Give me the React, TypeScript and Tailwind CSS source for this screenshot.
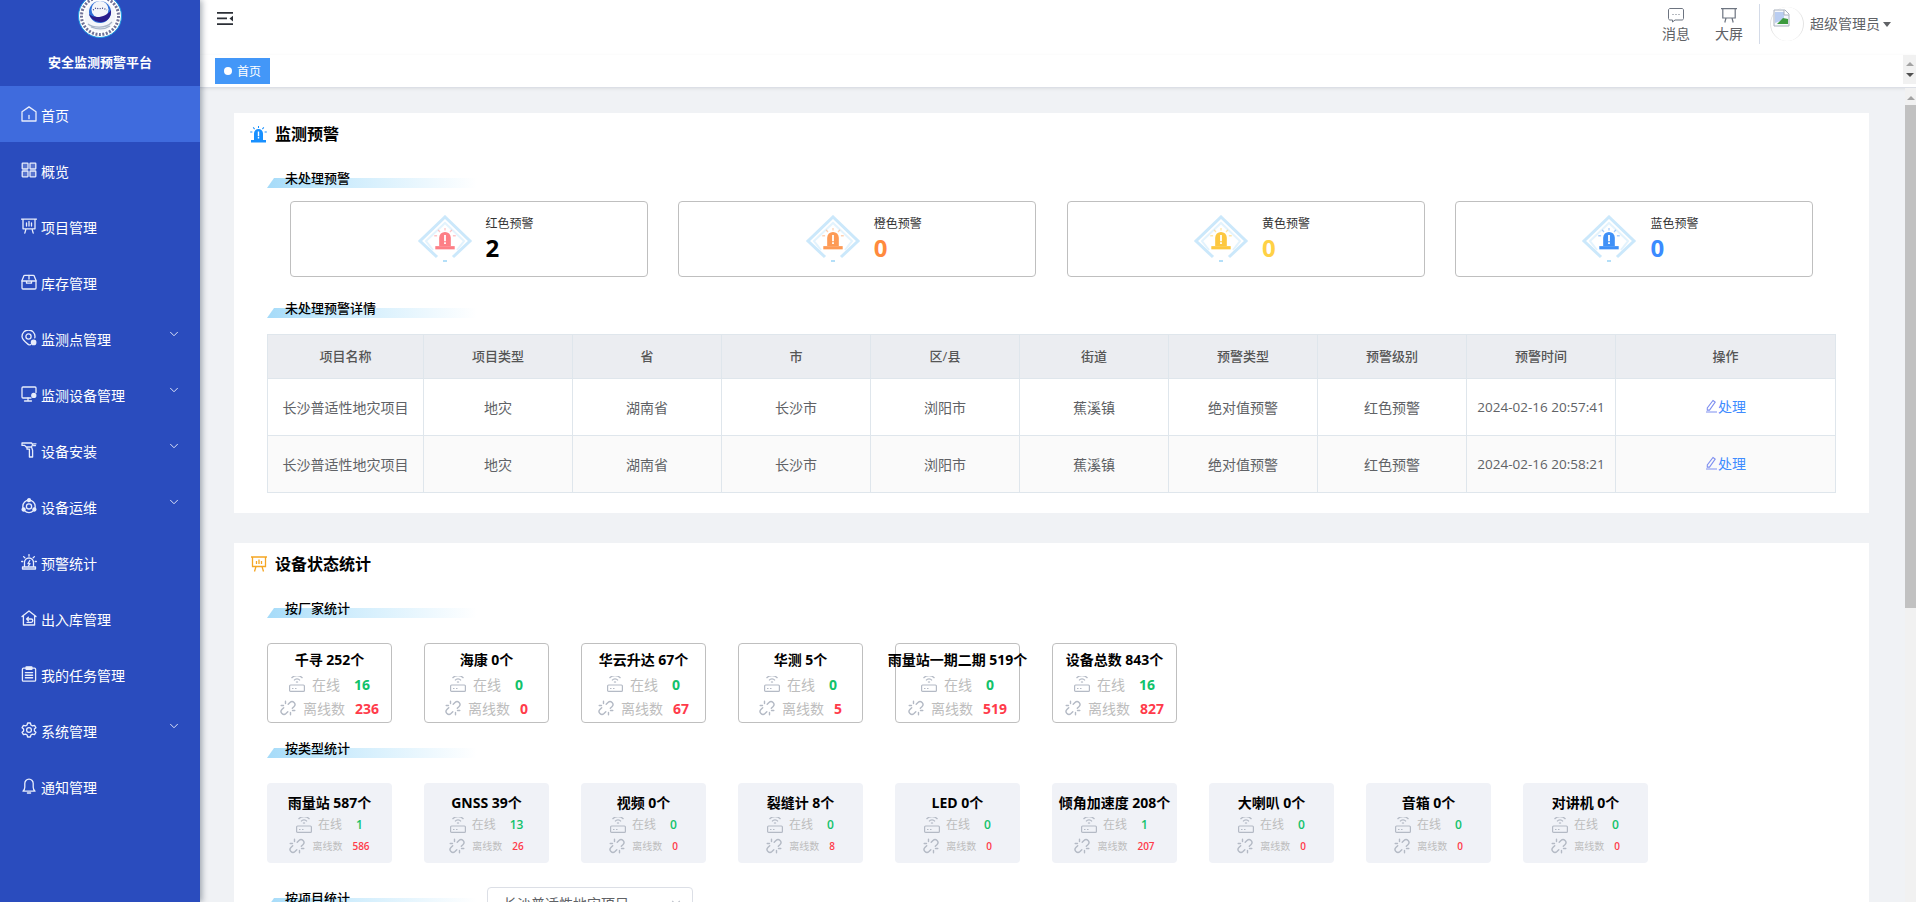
import type { ReactNode } from 'react';
import { ChevronDown } from 'lucide-react';

const strokeProps = {
  fill: 'none',
  stroke: 'currentColor',
  strokeWidth: 1.3,
  strokeLinecap: 'round' as const,
  strokeLinejoin: 'round' as const,
};

function Glyph({ size = 16, children, className }: { size?: number; children: ReactNode; className?: string }) {
  return (
    <svg width={size} height={size} viewBox="0 0 16 16" className={className} {...strokeProps}>
      {children}
    </svg>
  );
}

const navIcons: Record<string, ReactNode> = {
  home: (
    <>
      <path d="M1 15V5.800L8 .9l7 4.900V15z" />
      <path d="M8 9.500v3.200" />
    </>
  ),
  grid: (
    <>
      <rect x="1.200" y="1.200" width="5.800" height="5.800" rx=".5" fill="currentColor" fillOpacity=".25" />
      <rect x="9" y="1.200" width="5.800" height="5.800" rx=".5" fill="currentColor" fillOpacity=".25" />
      <rect x="1.200" y="9" width="5.800" height="5.800" rx=".5" fill="currentColor" fillOpacity=".25" />
      <rect x="9" y="9" width="5.800" height="5.800" rx=".5" fill="currentColor" fillOpacity=".25" />
    </>
  ),
  board: <path d="M.5 1.200h15M2 1.200v9.600h12V1.200M5 10.800l-1.200 4.400M11 10.800l1.200 4.400M5.500 8V5M8 8V3.500M10.500 8V5" />,
  box: (
    <>
      <path d="M1 6.500l1.800-4.600c.2-.4.500-.6.9-.6h8.600c.4 0 .7.2.9.6L15 6.500V14c0 .6-.4 1-1 1H2c-.6 0-1-.4-1-1z" />
      <path d="M1 7h14M5.500 7v2.200h5V7M8 1.500V5" />
    </>
  ),
  pin: (
    <>
      <path d="M9.500 14.600C8.800 15 8.200 15.200 7.500 14.600 5 12.600 1 9.700 1 6.500a6.500 6.500 0 0 1 13 0c0 .6-.1 1-.2 1.300" />
      <circle cx="7.500" cy="6.500" r="2.600" />
      <circle cx="12.600" cy="12.400" r="2.200" fill="currentColor" />
    </>
  ),
  monitor: (
    <>
      <path d="M15 6.500V2c0-.6-.4-1-1-1H2c-.6 0-1 .4-1 1v9c0 .6.4 1 1 1h8" />
      <path d="M7 12v3M3.500 15h7" />
      <circle cx="12.800" cy="9.400" r="2" fill="currentColor" />
    </>
  ),
  drill: <path d="M1 1h9.500l1.200 1.500L10.500 5H5.200L3.600 3.400H1zM6 5v2.200h2.400V15h3.200V8.200L10.500 5M12.500 1.800H15M12.500 3.600h2" />,
  ops: (
    <>
      <circle cx="8" cy="8.400" r="6.200" />
      <circle cx="8" cy="8.400" r="2.600" />
      <circle cx="8" cy="2.200" r="1.500" fill="currentColor" />
      <circle cx="2.600" cy="11.500" r="1.500" fill="currentColor" />
      <circle cx="13.400" cy="11.500" r="1.500" fill="currentColor" />
    </>
  ),
  siren: (
    <>
      <path d="M3.500 13V8.500a4.500 4.500 0 0 1 9 0V13M1.500 15h13v-2h-13z" />
      <path d="M8.800 6.500L7 9.600h2L7.400 12M8 .6v1.600M2.600 2.600l1.200 1.200M13.400 2.600l-1.200 1.200M.6 7.500h1.200M14.200 7.500h1.200" />
    </>
  ),
  storehouse: (
    <>
      <path d="M1 6.600L8 1l7 5.600M2.400 5.600V15h11.200V5.600" />
      <path d="M5.600 9h4.600c1 0 1.600.7 1.600 1.600s-.6 1.700-1.600 1.700H6M7.400 7.300L5.600 9l1.800 1.700" />
    </>
  ),
  clipboard: (
    <>
      <rect x="1.400" y="2.200" width="13.200" height="13" rx="1" />
      <rect x="5" y=".8" width="6" height="2.600" rx=".5" fill="currentColor" />
      <path d="M4.400 6.600h7.200M4.400 9.200h7.200M4.400 11.800h7.200" strokeWidth="1.400" />
    </>
  ),
  gear: (
    <>
      <path d="M6.600 1h2.800l.5 2 1.600.9 2-.6 1.400 2.400-1.500 1.400v1.800l1.500 1.400-1.400 2.400-2-.6-1.600.9-.5 2H6.600l-.5-2-1.600-.9-2 .6L1.100 10.300l1.500-1.400V7.100L1.100 5.700l1.400-2.400 2 .6 1.600-.9z" />
      <circle cx="8" cy="8" r="2.400" />
    </>
  ),
  bell: (
    <>
      <path d="M8 1.200c-2.600 0-4.200 2-4.200 4.400v3.600c0 1.800-.8 3-1.800 4h12c-1-1-1.800-2.200-1.800-4V5.600C12.200 3.200 10.600 1.200 8 1.200z" />
      <path d="M6.400 15h3.200" />
    </>
  ),
};

const navItems = [
  { label: '首页', icon: 'home', active: true },
  { label: '概览', icon: 'grid' },
  { label: '项目管理', icon: 'board' },
  { label: '库存管理', icon: 'box' },
  { label: '监测点管理', icon: 'pin', sub: true },
  { label: '监测设备管理', icon: 'monitor', sub: true },
  { label: '设备安装', icon: 'drill', sub: true },
  { label: '设备运维', icon: 'ops', sub: true },
  { label: '预警统计', icon: 'siren' },
  { label: '出入库管理', icon: 'storehouse' },
  { label: '我的任务管理', icon: 'clipboard' },
  { label: '系统管理', icon: 'gear', sub: true },
  { label: '通知管理', icon: 'bell' },
];

function Logo() {
  return (
    <svg width="44" height="44" viewBox="0 0 44 44" className="-mt-[6px] shrink-0">
      <circle cx="22" cy="22" r="21.500" fill="#ffffff" stroke="#1e9be0" strokeWidth="1" />
      <circle cx="22" cy="22" r="18.500" fill="none" stroke="#6f7196" strokeWidth="3" strokeDasharray="2 1.500" />
      <circle cx="22" cy="22" r="15.500" fill="#f4f6fa" />
      <circle cx="22" cy="18" r="11" fill="#2f6fd6" />
      <circle cx="22" cy="15.500" r="8.500" fill="#f4f6fa" />
      <path d="M11 20c5 5 17 4 22-4 1 8-5 13-12 12-5-1-9-4-10-8z" fill="#2a1e8c" />
      <path d="M15 16l3-2 3 1 3-1 3 1 2 1" fill="none" stroke="#2a2f78" strokeWidth="1.200" strokeDasharray="1 1.500" />
      <path d="M10 30c5 4 18 5 24-2M13 33c5 2 13 3 19-1" fill="none" stroke="#a7b4c8" strokeWidth="1.200" />
    </svg>
  );
}

function Sidebar() {
  return (
    <aside className="z-10 flex h-[902px] w-[200px] shrink-0 flex-col overflow-hidden bg-[#2a4cbe] text-white shadow-[2px_0_6px_rgba(0,21,41,0.35)]">
      <div className="flex h-[86px] shrink-0 flex-col items-center">
        <Logo />
        <div className="mt-[14px] text-[13px] leading-[20px] font-bold">安全监测预警平台</div>
      </div>
      {navItems.map((item) => (
        <div
          key={item.label}
          className={`relative flex h-[56px] shrink-0 items-center pl-[21px] text-[14px] ${item.active ? 'bg-[#3f6bdd]' : ''}`}
        >
          <Glyph className="mr-[4px] text-[#e8edfc]">{navIcons[item.icon]}</Glyph>
          <span className="mt-[2px]">{item.label}</span>
          {item.sub && <ChevronDown size={14} strokeWidth={1.6} className="absolute top-[17px] left-[167px] text-[#e8edfc]" />}
        </div>
      ))}
    </aside>
  );
}

function BrokenImage() {
  return (
    <svg width="18" height="18" viewBox="0 0 18 18">
      <path d="M1 1h11l4 4v12H1z" fill="#f5f7fb" stroke="#a9b1bd" strokeWidth="1" />
      <path d="M2 3h9v6l-4 3-5 2z" fill="#b9cdf1" />
      <path d="M4 15l6-6 5 1v5z" fill="#3c9a3e" />
      <path d="M11 1v5h5" fill="#ffffff" stroke="#a9b1bd" strokeWidth="1" />
    </svg>
  );
}

function Header() {
  return (
    <header className="flex h-[55px] shrink-0 items-start justify-between bg-white pl-[17px]">
      <svg width="16" height="14" viewBox="0 0 16 14" className="mt-[12px]" fill="#2b2f36">
        <path d="M0 0h16v1.800H0zM0 5.500h10v1.800H0zM0 11.200h16V13H0z" />
        <path d="M16 3.800v5.600l-3.500-2.800z" />
      </svg>
      <div className="flex items-start text-[14px] text-[#606266]">
        <div className="mt-[8px] flex w-[52px] flex-col items-center">
          <svg width="16" height="15" viewBox="0 0 16 15" fill="none" stroke="#6d7480" strokeWidth="1">
            <path d="M2 .5h12c.8 0 1.500.7 1.500 1.500v8.500c0 .8-.7 1.500-1.500 1.500H7l-2.500 2v-2H2c-.8 0-1.500-.7-1.500-1.500V2C.5 1.200 1.200.5 2 .5z" />
            <path d="M4.500 6.500h1M7.500 6.500h1M10.500 6.500h1" />
          </svg>
          <span className="mt-px leading-[20px]">消息</span>
        </div>
        <div className="mt-[8px] flex w-[54px] flex-col items-center">
          <svg width="16" height="15" viewBox="0 0 16 15" fill="none" stroke="#6d7480" strokeWidth="1.200">
            <path d="M0 .6h16M1.800.6v9.400h12.400V.6M5 10l-1.200 4.500M11 10l1.200 4.500" />
          </svg>
          <span className="mt-px leading-[20px]">大屏</span>
        </div>
        <div className="mt-[4px] ml-[3px] h-[40px] w-px bg-[#d4dbe8]" />
        <div className="mt-[7px] ml-[10px] flex h-[34px] w-[34px] items-start justify-start rounded-full border-x border-x-[#e4e4e4] pt-[2px] pl-[2px]">
          <BrokenImage />
        </div>
        <div className="mt-[14px] ml-[6px] flex items-center leading-[20px]">
          超级管理员
          <span className="mt-[1px] ml-[3px] h-0 w-0 border-x-[4px] border-t-[5px] border-x-transparent border-t-[#606266]" />
        </div>
        <div className="w-[25px]" />
      </div>
    </header>
  );
}

function TagBar() {
  return (
    <div className="flex h-[33px] shrink-0 items-start justify-between border-b border-[#dcdfe6] bg-white pl-[15px] shadow-[0_1px_3px_rgba(0,0,0,0.08)]">
      <div className="mt-[3px] flex h-[26px] w-[55px] items-center gap-[5px] bg-[#4397f8] pl-[9px] text-[12px] text-white">
        <span className="h-[8px] w-[8px] rounded-full bg-white" />
        <span className="mt-[2px]">首页</span>
      </div>
      <div className="flex h-[29px] w-[13px] flex-col items-center justify-center gap-[7px] bg-[#f1f1f1]">
        <span className="h-0 w-0 border-x-[4px] border-b-[4px] border-x-transparent border-b-[#a3a3a3]" />
        <span className="h-0 w-0 border-x-[4px] border-t-[4px] border-x-transparent border-t-[#505050]" />
      </div>
    </div>
  );
}

function SectionTitle({ label, icon }: { label: string; icon: ReactNode }) {
  return (
    <div className="flex h-[42px] items-center pl-[16px]">
      <span className="mr-[8px] flex h-[17px] w-[17px] items-center justify-center">{icon}</span>
      <h2 className="text-[16px] leading-[22px] font-bold text-black">{label}</h2>
    </div>
  );
}

function SubTitle({ label, className = '' }: { label: string; className?: string }) {
  return (
    <div className={`relative h-[20px] w-[210px] ${className}`}>
      <span className="absolute bottom-0 left-0 h-[10px] w-[210px] bg-[linear-gradient(90deg,#a5dbf9_0%,#c8eafc_30%,#ffffff_100%)] [clip-path:polygon(7px_0,100%_0,100%_100%,0_100%)]" />
      <span className="absolute top-0 left-[18px] text-[13px] leading-[20px] font-medium text-black">{label}</span>
    </div>
  );
}

function AlarmIcon({ size, color, rays = 1 }: { size: number; color: string; rays?: number }) {
  return (
    <svg width={size} height={size} viewBox="0 0 17 17" fill={color}>
      <path d="M4 14V7.500a4.500 4.500 0 0 1 9 0V14z" />
      <path d="M1 14h15v2.500H1z" />
      <path opacity={rays} d="M8 0h1v2H8zM2.800 1.800l.8-.7L5 2.800l-.8.7zM14.200 1.800l-.8-.7L12 2.800l.8.7zM.2 5.500h2.200v1H.2zM14.600 5.500h2.200v1h-2.200z" />
      <path d="M7.800 5.500h1.400v4.700H7.800zM7.800 11h1.400v1.400H7.800z" fill="#ffffff" />
    </svg>
  );
}

function AlertDiamond({ color }: { color: string }) {
  return (
    <div className="relative h-[48px] w-[56px] shrink-0">
      <svg width="56" height="48" viewBox="0 0 56 48" fill="none">
        <path d="M20 42L3 26 28 2l25 24-17 16" stroke="#cbe8fb" strokeWidth="3" />
        <path d="M16 35L9 26 28 8l19 18-7 9" stroke="#e3f3fd" strokeWidth="2" />
        <path d="M26 46h4" stroke="#b4dff8" strokeWidth="2" />
      </svg>
      <span className="absolute top-[13px] left-[17px] flex">
        <AlarmIcon size={22} color={color} rays={0.45} />
      </span>
    </div>
  );
}

const alerts = [
  { label: '红色预警', value: 2, icon: '#fd7f86', text: 'text-black' },
  { label: '橙色预警', value: 0, icon: '#fd9a55', text: 'text-[#ff8a3d]' },
  { label: '黄色预警', value: 0, icon: '#fdc840', text: 'text-[#ffd145]' },
  { label: '蓝色预警', value: 0, icon: '#3f90f7', text: 'text-[#3b8bff]' },
];

function AlertCard({ label, value, icon, text }: (typeof alerts)[number]) {
  return (
    <div className="flex h-[76px] w-[358px] items-center justify-center rounded-[4px] border border-[#bfbfbf] pl-[16px]">
      <AlertDiamond color={icon} />
      <div className="ml-[13px] flex w-[52px] flex-col">
        <span className="text-[12px] leading-[18px] whitespace-nowrap text-[#333333]">{label}</span>
        <span className={`text-[24px] leading-[30px] font-bold ${text}`}>{value}</span>
      </div>
    </div>
  );
}

const tableHead = ['项目名称', '项目类型', '省', '市', '区/县', '街道', '预警类型', '预警级别', '预警时间', '操作'];
const tableRows = [
  ['长沙普适性地灾项目', '地灾', '湖南省', '长沙市', '浏阳市', '蕉溪镇', '绝对值预警', '红色预警', '2024-02-16 20:57:41'],
  ['长沙普适性地灾项目', '地灾', '湖南省', '长沙市', '浏阳市', '蕉溪镇', '绝对值预警', '红色预警', '2024-02-16 20:58:21'],
];

function WarningTable() {
  return (
    <table className="mt-[16px] ml-[33px] w-[1569px] table-fixed border-collapse text-center text-[14px] text-[#606266]">
      <colgroup>
        <col className="w-[156px]" />
        <col className="w-[149px]" />
        <col className="w-[149px]" />
        <col className="w-[149px]" />
        <col className="w-[149px]" />
        <col className="w-[149px]" />
        <col className="w-[149px]" />
        <col className="w-[149px]" />
        <col className="w-[149px]" />
        <col />
      </colgroup>
      <thead>
        <tr className="h-[44px] bg-[#ebedf1] text-[13px] text-[#555555]">
          {tableHead.map((h) => (
            <th key={h} className="border border-[#dfe6ec] font-medium">
              {h}
            </th>
          ))}
        </tr>
      </thead>
      <tbody>
        {tableRows.map((row, i) => (
          <tr key={row[8]} className={`h-[57px] ${i % 2 ? 'bg-[#fafafa]' : 'bg-white'}`}>
            {row.map((cell, j) => (
              <td key={j} className={`border border-[#dfe6ec] whitespace-nowrap ${j === 8 ? 'text-[13.500px]' : ''}`}>
                {cell}
              </td>
            ))}
            <td className="border border-[#dfe6ec]">
              <span className="inline-flex items-center text-[#3f8cff]">
                <svg width="13" height="14" viewBox="0 0 13 14" fill="none" stroke="#7f8ff0" strokeWidth="1.100">
                  <path d="M8 1.500l2.200 1.600-5.700 8H2.300V8.900zM1 13h11" />
                </svg>
                处理
              </span>
            </td>
          </tr>
        ))}
      </tbody>
    </table>
  );
}

function RouterIcon() {
  return (
    <svg width="16" height="16" viewBox="0 0 16 16" fill="none" stroke="#b4bac5" strokeWidth="1.200" className="shrink-0">
      <path d="M2.500 2a7.500 7.500 0 0 1 11 0M5 4.300a4 4 0 0 1 6 0M7 6.400a1.500 1.500 0 0 1 2 0" />
      <rect x=".6" y="9" width="14.800" height="6.400" rx="1" />
      <path d="M3 12.500h1.500M6 12.500h1.500" />
    </svg>
  );
}

function BrokenLinkIcon() {
  return (
    <svg width="16" height="16" viewBox="0 0 16 16" fill="none" stroke="#b4bac5" strokeWidth="1.400" strokeLinecap="round" className="shrink-0">
      <path d="M8.200 4.200L10 2.400a2.900 2.900 0 0 1 4.100 4.100L12.300 8.300M7.800 11.800L6 13.600a2.900 2.900 0 0 1-4.100-4.100L3.700 7.700" />
      <path d="M5.500 1.200v2.300M1.200 5.500h2.300M10.500 12.500v2.300M12.500 10.500h2.300" />
    </svg>
  );
}

const vendorStats = [
  { title: '千寻 252个', online: 16, offline: 236 },
  { title: '海康 0个', online: 0, offline: 0 },
  { title: '华云升达 67个', online: 0, offline: 67 },
  { title: '华测 5个', online: 0, offline: 5 },
  { title: '雨量站一期二期 519个', online: 0, offline: 519 },
  { title: '设备总数 843个', online: 16, offline: 827 },
];

const typeStats = [
  { title: '雨量站 587个', online: 1, offline: 586 },
  { title: 'GNSS 39个', online: 13, offline: 26 },
  { title: '视频 0个', online: 0, offline: 0 },
  { title: '裂缝计 8个', online: 0, offline: 8 },
  { title: 'LED 0个', online: 0, offline: 0 },
  { title: '倾角加速度 208个', online: 1, offline: 207 },
  { title: '大喇叭 0个', online: 0, offline: 0 },
  { title: '音箱 0个', online: 0, offline: 0 },
  { title: '对讲机 0个', online: 0, offline: 0 },
];

function VendorCard({ title, online, offline }: (typeof vendorStats)[number]) {
  return (
    <div className="flex h-[80px] w-[125px] shrink-0 flex-col items-center rounded-[4px] border border-[#bfbfbf] pt-[6px] text-[#bdbdbd]">
      <div className="text-[14px] leading-[19px] font-bold whitespace-nowrap text-black">{title}</div>
      <div className="mt-[5px] flex h-[20px] items-center text-[14px]">
        <RouterIcon />
        <span className="mr-[14px] ml-[7px]">在线</span>
        <b className="text-[#12c26a]">{online}</b>
      </div>
      <div className="mt-[4px] flex h-[20px] items-center text-[14px]">
        <BrokenLinkIcon />
        <span className="mr-[10px] ml-[7px]">离线数</span>
        <b className="text-[#ff3b4a]">{offline}</b>
      </div>
    </div>
  );
}

function TypeCard({ title, online, offline }: (typeof typeStats)[number]) {
  return (
    <div className="flex h-[80px] w-[125px] shrink-0 flex-col items-center rounded-[4px] bg-[#f0f2f7] pt-[10px] text-[#bdbdbd]">
      <div className="text-[14px] leading-[19px] font-bold whitespace-nowrap text-black">{title}</div>
      <div className="mt-[3px] flex h-[20px] items-center text-[12px]">
        <RouterIcon />
        <span className="mr-[14px] ml-[6px]">在线</span>
        <b className="font-semibold text-[#12c26a]">{online}</b>
      </div>
      <div className="mt-[1px] flex h-[20px] items-center text-[10px]">
        <BrokenLinkIcon />
        <span className="mr-[10px] ml-[7px]">离线数</span>
        <b className="font-semibold text-[#ff3b4a]">{offline}</b>
      </div>
    </div>
  );
}

function Content() {
  return (
    <div className="h-[814px] min-w-0 flex-1 overflow-hidden pt-[25px] pl-[34px]">
      <section className="h-[400px] w-[1635px] bg-white">
        <SectionTitle label="监测预警" icon={<AlarmIcon size={17} color="#1890ff" />} />
        <SubTitle label="未处理预警" className="mt-[13px] ml-[33px]" />
        <div className="mt-[13px] ml-[56px] flex gap-[30.300px]">
          {alerts.map((a) => (
            <AlertCard key={a.label} {...a} />
          ))}
        </div>
        <SubTitle label="未处理预警详情" className="mt-[21px] ml-[33px]" />
        <WarningTable />
      </section>

      <section className="mt-[30px] w-[1635px] bg-white">
        <SectionTitle
          label="设备状态统计"
          icon={
            <svg width="16" height="16" viewBox="0 0 16 16" fill="none" stroke="#f5a623" strokeWidth="1.300">
              <path d="M0 1h16M1.500 1v9.500h13V1M5 10.500L3.500 15.500M11 10.500l1.500 5M5.500 8V5M8 8V3.500M10.500 8V5" />
            </svg>
          }
        />
        <SubTitle label="按厂家统计" className="mt-[13px] ml-[33px]" />
        <div className="mt-[25px] ml-[33px] flex gap-[32px]">
          {vendorStats.map((s) => (
            <VendorCard key={s.title} {...s} />
          ))}
        </div>
        <SubTitle label="按类型统计" className="mt-[15px] ml-[33px]" />
        <div className="mt-[25px] ml-[33px] flex gap-[32px]">
          {typeStats.map((s) => (
            <TypeCard key={s.title} {...s} />
          ))}
        </div>
        <div className="mt-[24px] ml-[33px] flex items-start">
          <SubTitle label="按项目统计" className="mt-[1px]" />
          <div className="ml-[10px] flex h-[32px] w-[206px] items-center justify-between rounded-[4px] border border-[#dcdfe6] pr-[9px] pl-[15px] text-[14px] text-[#606266]">
            长沙普适性地灾项目
            <ChevronDown size={14} className="text-[#c0c4cc]" />
          </div>
        </div>
      </section>
    </div>
  );
}

function PageScrollbar() {
  return (
    <div className="flex h-[814px] w-[11px] shrink-0 flex-col items-center bg-[#f1f1f1] pt-[8px]">
      <span className="h-0 w-0 border-x-[4px] border-b-[4px] border-x-transparent border-b-[#a3a3a3]" />
      <span className="mt-[5px] h-[503px] w-[11px] bg-[#c1c1c1]" />
    </div>
  );
}

export default function App() {
  return (
    <div className="flex h-[902px] w-[1916px] overflow-hidden bg-[#f0f2f5] font-['Open_Sans','Noto_Sans_CJK_SC',sans-serif]">
      <Sidebar />
      <main className="flex min-w-0 flex-1 flex-col">
        <Header />
        <TagBar />
        <div className="flex min-h-0 flex-1">
          <Content />
          <PageScrollbar />
        </div>
      </main>
    </div>
  );
}
